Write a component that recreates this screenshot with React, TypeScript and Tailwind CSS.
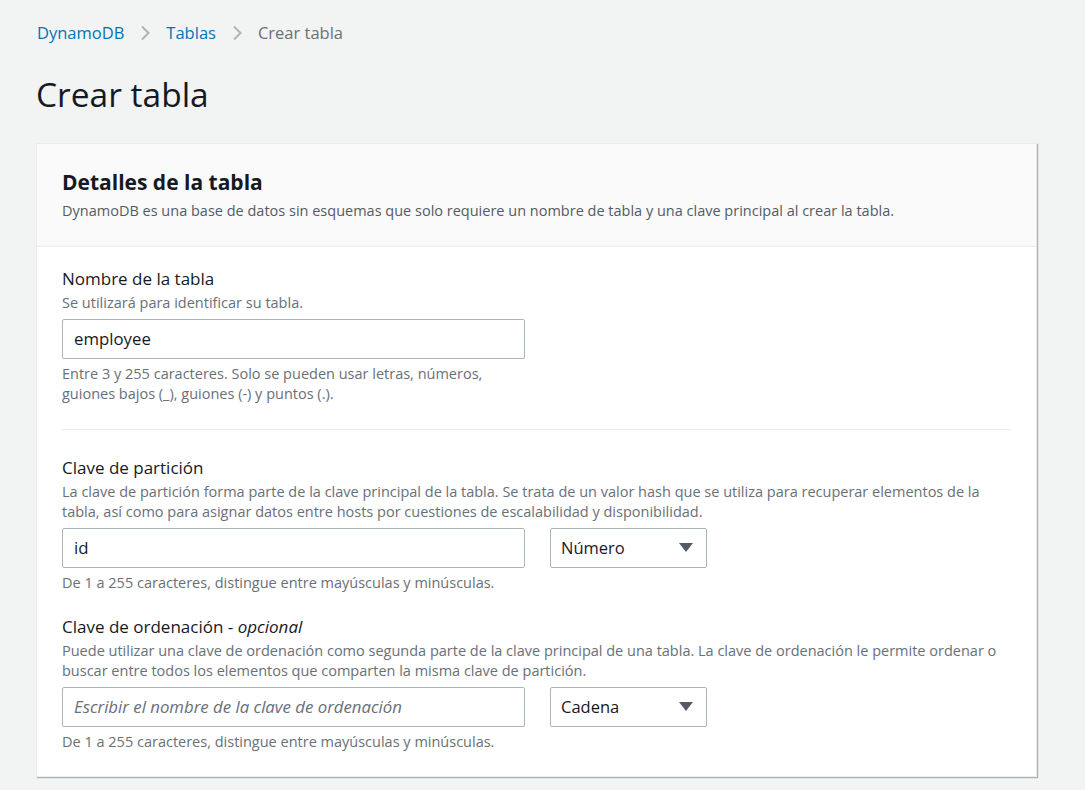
import { ReactNode } from 'react'

const font = { fontFamily: '"Open Sans", "Noto Sans", Arial, sans-serif' }

function Chevron() {
  return (
    <svg width="16" height="16" viewBox="0 0 16 16" className="mx-[13px]">
      <path d="M5 1.5l6.5 6.5-6.5 6.5" fill="none" stroke="#aab7b8" strokeWidth="2" />
    </svg>
  )
}

function Caret() {
  return (
    <svg width="14" height="10" viewBox="0 0 14 10">
      <path d="M0 0h14L7 9z" fill="#545b64" />
    </svg>
  )
}

function Field({ label, desc, children, hint }: { label: ReactNode; desc: ReactNode; children: ReactNode; hint: ReactNode }) {
  return (
    <div>
      <div className="text-[17px] leading-[22px] text-[#16191f]">{label}</div>
      <div className="text-[14.5px] leading-[20px] text-[#687078] mt-[3px]">{desc}</div>
      <div className="mt-[6px]">{children}</div>
      <div className="text-[14.5px] leading-[20px] text-[#687078] mt-[5px]">{hint}</div>
    </div>
  )
}

function Input({ value, placeholder }: { value?: string; placeholder?: string }) {
  return (
    <div className="w-[463px] h-[40px] border border-[#aab7b8] rounded-[2px] bg-white flex items-center px-[11px] text-[16.8px]">
      {value ? (
        <span className="text-[#16191f]">{value}</span>
      ) : (
        <span className="text-[#687078] italic">{placeholder}</span>
      )}
    </div>
  )
}

function Select({ value }: { value: string }) {
  return (
    <div className="w-[157px] h-[40px] border border-[#aab7b8] rounded-[2px] bg-white flex items-center justify-between pl-[10px] pr-[13px] text-[16.5px] text-[#16191f]">
      <span>{value}</span>
      <Caret />
    </div>
  )
}

export default function App() {
  return (
    <div className="min-h-[790px] bg-[#f2f3f3] pl-[36px] pr-[48px] pt-[20px] pb-[12px]" style={font}>
      <nav className="flex items-center text-[16.5px] leading-[26px] pl-[1px]">
        <span className="text-[#0073bb]">DynamoDB</span>
        <Chevron />
        <span className="text-[#0073bb]">Tablas</span>
        <Chevron />
        <span className="text-[#687078]">Crear tabla</span>
      </nav>
      <h1 className="text-[33.5px] leading-[44px] text-[#16191f] mt-[26px]">Crear tabla</h1>

      <div className="mt-[27px] bg-white border border-[#eaeded] shadow-[1px_1px_1px_0_rgba(0,28,36,0.3)]">
        <div className="bg-[#fafafa] border-b border-[#eaeded] px-[25px] pt-[24px] pb-[25px]">
          <h2 className="text-[21px] leading-[28px] font-bold text-[#16191f]">Detalles de la tabla</h2>
          <p className="text-[14.5px] leading-[20px] text-[#545b64] mt-[5px]">
            DynamoDB es una base de datos sin esquemas que solo requiere un nombre de tabla y una clave principal al crear la tabla.
          </p>
        </div>

        <div className="px-[25px] pt-[21px] pb-[24px]">
          <Field
            label="Nombre de la tabla"
            desc="Se utilizará para identificar su tabla."
            hint={
              <>
                Entre 3 y 255 caracteres. Solo se pueden usar letras, números,
                <br />
                guiones bajos (_), guiones (-) y puntos (.).
              </>
            }
          >
            <Input value="employee" />
          </Field>

          <div className="border-t border-[#eaeded] mt-[25px] mb-[27px]" />

          <Field
            label="Clave de partición"
            desc="La clave de partición forma parte de la clave principal de la tabla. Se trata de un valor hash que se utiliza para recuperar elementos de la tabla, así como para asignar datos entre hosts por cuestiones de escalabilidad y disponibilidad."
            hint="De 1 a 255 caracteres, distingue entre mayúsculas y minúsculas."
          >
            <div className="flex gap-[25px]">
              <Input value="id" />
              <Select value="Número" />
            </div>
          </Field>

          <div className="mt-[23px]">
            <Field
              label={
                <>
                  Clave de ordenación - <i>opcional</i>
                </>
              }
              desc="Puede utilizar una clave de ordenación como segunda parte de la clave principal de una tabla. La clave de ordenación le permite ordenar o buscar entre todos los elementos que comparten la misma clave de partición."
              hint="De 1 a 255 caracteres, distingue entre mayúsculas y minúsculas."
            >
              <div className="flex gap-[25px]">
                <Input placeholder="Escribir el nombre de la clave de ordenación" />
                <Select value="Cadena" />
              </div>
            </Field>
          </div>
        </div>
      </div>
    </div>
  )
}
